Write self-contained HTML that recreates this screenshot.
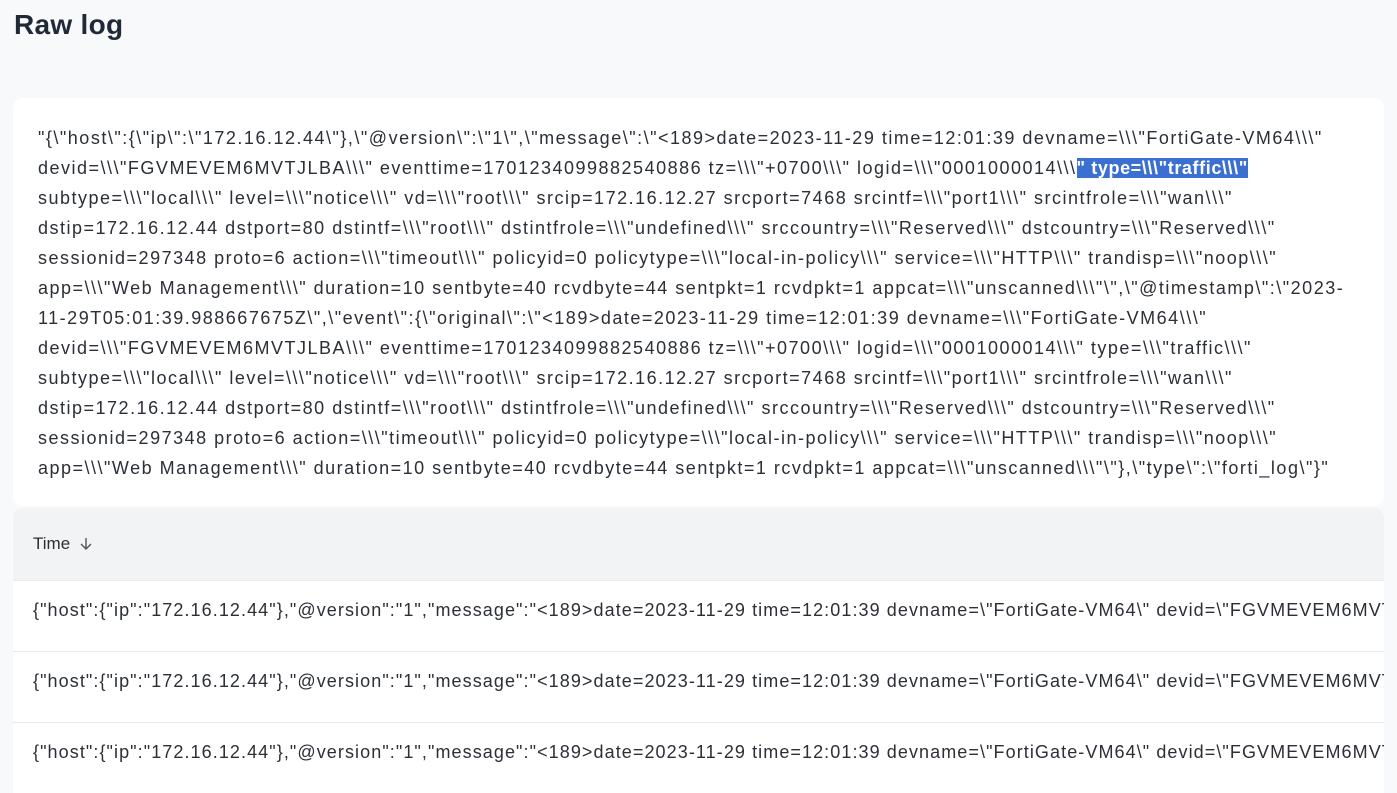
<!DOCTYPE html>
<html><head><meta charset="utf-8"><style>
*{margin:0;padding:0;box-sizing:border-box}
body{width:1397px;height:793px;overflow:hidden;background:#f8f9fb;font-family:"Liberation Sans",sans-serif;color:#1f2328;position:relative}
h1{position:absolute;left:14px;top:9px;font-size:28px;font-weight:700;color:#1f2937;letter-spacing:0.3px}
.card{position:absolute;left:13px;top:98px;width:1371px;height:408px;background:#fff;border-radius:10px;overflow:hidden}
.ln{position:absolute;left:25px;white-space:nowrap;font-size:18px;letter-spacing:1.5px;color:#2b2f36;line-height:30px}
.hl{background:#3b6fd1;color:#fff;font-weight:700;letter-spacing:0.6px}
.th{position:absolute;left:13px;top:508px;width:1371px;height:72px;background:#f2f3f5;border-radius:10px 10px 0 0}
.th span{position:absolute;left:20px;top:26px;font-size:17px;color:#2b2f36}
.row{position:absolute;left:13px;width:1371px;height:71px;background:#fff;border-top:1px solid #e8e9ec;overflow:hidden}
.row span{position:absolute;left:20px;top:19px;white-space:nowrap;font-size:18px;letter-spacing:1.08px;color:#2b2f36}
</style></head><body>
<h1>Raw log</h1>
<div class="card">
<div class="ln" style="top:25px">"{\"host\":{\"ip\":\"172.16.12.44\"},\"@version\":\"1\",\"message\":\"&lt;189&gt;date=2023-11-29 time=12:01:39 devname=\\\"FortiGate-VM64\\\"</div>
<div class="ln" style="top:55px">devid=\\\"FGVMEVEM6MVTJLBA\\\" eventtime=1701234099882540886 tz=\\\"+0700\\\" logid=\\\"0001000014\\\<span class="hl">" type=\\\"traffic\\\"</span></div>
<div class="ln" style="top:85px">subtype=\\\"local\\\" level=\\\"notice\\\" vd=\\\"root\\\" srcip=172.16.12.27 srcport=7468 srcintf=\\\"port1\\\" srcintfrole=\\\"wan\\\"</div>
<div class="ln" style="top:115px">dstip=172.16.12.44 dstport=80 dstintf=\\\"root\\\" dstintfrole=\\\"undefined\\\" srccountry=\\\"Reserved\\\" dstcountry=\\\"Reserved\\\"</div>
<div class="ln" style="top:145px">sessionid=297348 proto=6 action=\\\"timeout\\\" policyid=0 policytype=\\\"local-in-policy\\\" service=\\\"HTTP\\\" trandisp=\\\"noop\\\"</div>
<div class="ln" style="top:175px">app=\\\"Web Management\\\" duration=10 sentbyte=40 rcvdbyte=44 sentpkt=1 rcvdpkt=1 appcat=\\\"unscanned\\\"\",\"@timestamp\":\"2023-</div>
<div class="ln" style="top:205px">11-29T05:01:39.988667675Z\",\"event\":{\"original\":\"&lt;189&gt;date=2023-11-29 time=12:01:39 devname=\\\"FortiGate-VM64\\\"</div>
<div class="ln" style="top:235px">devid=\\\"FGVMEVEM6MVTJLBA\\\" eventtime=1701234099882540886 tz=\\\"+0700\\\" logid=\\\"0001000014\\\" type=\\\"traffic\\\"</div>
<div class="ln" style="top:265px">subtype=\\\"local\\\" level=\\\"notice\\\" vd=\\\"root\\\" srcip=172.16.12.27 srcport=7468 srcintf=\\\"port1\\\" srcintfrole=\\\"wan\\\"</div>
<div class="ln" style="top:295px">dstip=172.16.12.44 dstport=80 dstintf=\\\"root\\\" dstintfrole=\\\"undefined\\\" srccountry=\\\"Reserved\\\" dstcountry=\\\"Reserved\\\"</div>
<div class="ln" style="top:325px">sessionid=297348 proto=6 action=\\\"timeout\\\" policyid=0 policytype=\\\"local-in-policy\\\" service=\\\"HTTP\\\" trandisp=\\\"noop\\\"</div>
<div class="ln" style="top:355px">app=\\\"Web Management\\\" duration=10 sentbyte=40 rcvdbyte=44 sentpkt=1 rcvdpkt=1 appcat=\\\"unscanned\\\"\"},\"type\":\"forti_log\"}"</div>
</div>
<div class="th"><span>Time <svg width="14" height="14" viewBox="0 0 14 14" style="vertical-align:-2px;margin-left:4px"><path d="M7 1v11M2 7l5 5 5-5" fill="none" stroke="#555" stroke-width="1.4"/></svg></span></div>
<div class="row" style="top:580px"><span>{"host":{"ip":"172.16.12.44"},"@version":"1","message":"&lt;189&gt;date=2023-11-29 time=12:01:39 devname=\"FortiGate-VM64\" devid=\"FGVMEVEM6MVTJLBA\"</span></div>
<div class="row" style="top:651px"><span>{"host":{"ip":"172.16.12.44"},"@version":"1","message":"&lt;189&gt;date=2023-11-29 time=12:01:39 devname=\"FortiGate-VM64\" devid=\"FGVMEVEM6MVTJLBA\"</span></div>
<div class="row" style="top:722px"><span>{"host":{"ip":"172.16.12.44"},"@version":"1","message":"&lt;189&gt;date=2023-11-29 time=12:01:39 devname=\"FortiGate-VM64\" devid=\"FGVMEVEM6MVTJLBA\"</span></div>
</body></html>
